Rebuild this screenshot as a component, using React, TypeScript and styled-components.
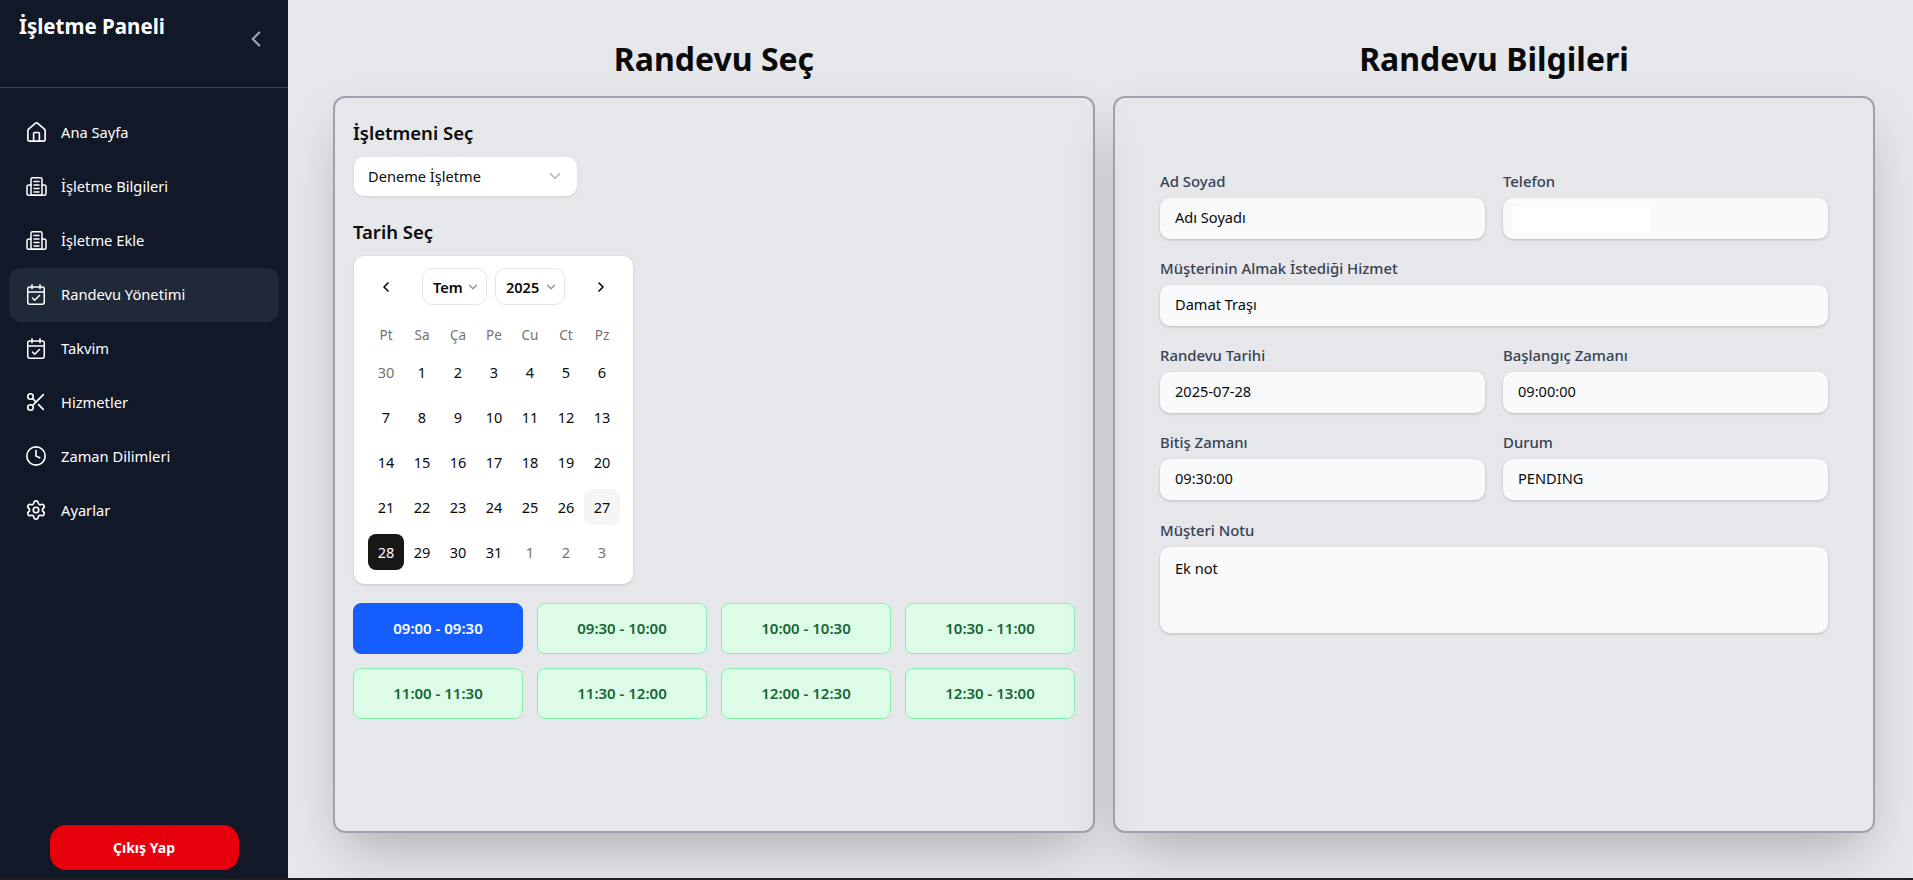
import React from 'react';
import styled, { createGlobalStyle } from 'styled-components';
import { ChevronDown, ChevronLeft, ChevronRight, Clock, House, Scissors, Settings } from 'lucide-react';

const GlobalStyle = createGlobalStyle`
  * { box-sizing: border-box; }
  html, body { margin: 0; padding: 0; background: #1f1f1f; }
  body { font-family: "Noto Sans", "Open Sans", sans-serif; }
`;

const Page = styled.div`
  display: flex;
  width: 1913px;
  height: 878px;
  overflow: hidden;
`;

const Sidebar = styled.aside`
  display: flex;
  flex-direction: column;
  width: 288px;
  flex-shrink: 0;
  background: #111827;
  color: #fff;
`;

const SidebarHeader = styled.div`
  display: flex;
  justify-content: space-between;
  height: 88px;
  padding: 11px 19px 0 19px;
  border-bottom: 1px solid #374151;
`;

const Brand = styled.h1`
  margin: 0;
  font-size: 20.5px;
  line-height: 30px;
  font-weight: 700;
`;

const Collapse = styled.span`
  display: flex;
  margin-top: 15px;
  color: #9ca3af;
`;

const Nav = styled.nav`
  display: flex;
  flex-direction: column;
  padding: 18px 9px 0;
  flex: 1;
`;

const NavItem = styled.a<{ $active?: boolean }>`
  display: flex;
  align-items: center;
  gap: 15px;
  height: 54px;
  padding: 0 0 2px 17px;
  border-radius: 12px;
  font-size: 14.7px;
  background: ${props => (props.$active ? '#1f2937' : 'transparent')};
  color: #fff;
`;

const IconBox = styled.span`
  display: flex;
  align-items: center;
  justify-content: center;
  width: 20px;
  height: 20px;
  flex-shrink: 0;
  svg { flex-shrink: 0; }
`;

const LogoutWrap = styled.div`
  display: flex;
  justify-content: center;
  padding-bottom: 8px;
`;

const LogoutButton = styled.button`
  width: 189px;
  height: 45px;
  border: none;
  border-radius: 16px;
  background: #e7000b;
  color: #fff;
  font-family: inherit;
  font-size: 14px;
  font-weight: 700;
`;

const Main = styled.main`
  flex: 1;
  display: grid;
  grid-template-columns: 762px 762px;
  column-gap: 18px;
  align-content: start;
  padding: 36px 0 0 45px;
  background: #e5e7eb;
`;

const Column = styled.section`
  display: flex;
  flex-direction: column;
`;

const Title = styled.h2`
  margin: 0 0 15px;
  height: 45px;
  font-size: 32px;
  line-height: 45px;
  font-weight: 700;
  text-align: center;
  color: #0a0a0a;
`;

const Card = styled.div`
  height: 737px;
  border: 2px solid #9ca3af;
  border-radius: 12px;
  box-shadow: 0 25px 50px -12px rgba(0, 0, 0, 0.25);
`;

const LeftCard = styled(Card)`
  padding: 21px 18px;
`;

const SectionLabel = styled.h3`
  margin: 0 0 11px;
  font-size: 18.5px;
  line-height: 27px;
  font-weight: 600;
  color: #0a0a0a;
`;

const SelectBox = styled.div`
  display: flex;
  align-items: center;
  justify-content: space-between;
  width: 223px;
  height: 39px;
  margin: 0 0 22px 1px;
  padding: 0 13px 2px 14px;
  border-radius: 10px;
  background: #fff;
  box-shadow: 0 1px 2px rgba(0, 0, 0, 0.1);
  font-size: 14.6px;
  color: #0a0a0a;
  svg { color: #b4b4b4; }
`;

const Calendar = styled.div`
  width: 279px;
  height: 328px;
  margin-left: 1px;
  padding: 12px 14px;
  border-radius: 10px;
  background: #fff;
  box-shadow: 0 1px 3px rgba(0, 0, 0, 0.15);
`;

const CalHeader = styled.div`
  display: flex;
  align-items: center;
  justify-content: space-between;
  height: 37px;
  padding: 0 10px;
  color: #0a0a0a;
`;

const CalSelects = styled.div`
  display: flex;
  gap: 8px;
`;

const CalSelect = styled.div<{ $width: number }>`
  display: flex;
  align-items: center;
  justify-content: space-between;
  width: ${props => props.$width}px;
  height: 37px;
  padding: 0 6px 0 10px;
  border: 1px solid #e5e5e5;
  border-radius: 10px;
  font-size: 14.5px;
  font-weight: 600;
  svg { color: #8a8a8a; }
`;

const CalGrid = styled.div`
  display: grid;
  grid-template-columns: repeat(7, 36px);
  grid-template-rows: 29px;
  grid-auto-rows: 45px;
  margin-top: 15px;
`;

const WeekDay = styled.div`
  display: flex;
  align-items: center;
  justify-content: center;
  font-size: 13.5px;
  color: #737373;
`;

const Day = styled.div<{ $muted?: boolean; $selected?: boolean; $today?: boolean }>`
  display: flex;
  align-items: center;
  justify-content: center;
  align-self: center;
  height: 36px;
  border-radius: 8px;
  font-size: 14.5px;
  color: ${props => (props.$selected ? '#fafafa' : props.$muted ? '#737373' : '#0a0a0a')};
  background: ${props => (props.$selected ? '#171717' : props.$today ? '#f5f5f5' : 'transparent')};
`;

const Slots = styled.div`
  display: grid;
  grid-template-columns: repeat(4, 170px);
  grid-auto-rows: 51px;
  gap: 14px;
  margin-top: 19px;
`;

const Slot = styled.button<{ $selected?: boolean }>`
  padding: 0 0 2px;
  border: 1px solid ${props => (props.$selected ? '#155dfc' : '#86efac')};
  border-radius: 8px;
  background: ${props => (props.$selected ? '#155dfc' : '#dcfce7')};
  color: ${props => (props.$selected ? '#fff' : '#166534')};
  font-family: inherit;
  font-size: 15px;
  font-weight: 600;
`;

const RightCard = styled(Card)`
  padding: 73px 0 0 45px;
`;

const FormGrid = styled.div`
  display: grid;
  grid-template-columns: 324.5px 324.5px;
  column-gap: 18.5px;
  row-gap: 19px;
`;

const Field = styled.div<{ $wide?: boolean }>`
  display: flex;
  flex-direction: column;
  gap: 6px;
  grid-column: ${props => (props.$wide ? '1 / -1' : 'auto')};
`;

const NoteField = styled(Field)`
  margin-top: 1px;
`;

const FieldLabel = styled.label`
  font-size: 14.9px;
  line-height: 21px;
  font-weight: 500;
  color: #374151;
`;

const Input = styled.div`
  position: relative;
  display: flex;
  align-items: center;
  height: 41px;
  padding: 0 15px 3px;
  border-radius: 10px;
  background: #f9fafb;
  box-shadow: 0 1px 3px rgba(0, 0, 0, 0.2);
  font-size: 14.6px;
  color: #0a0a0a;
`;

const TextArea = styled(Input)`
  align-items: flex-start;
  height: 86px;
  padding-top: 11px;
`;

const Redaction = styled.span`
  position: absolute;
  left: 10px;
  top: 9px;
  width: 137px;
  height: 26px;
  border-radius: 2px;
  background: #fff;
`;

const CalendarCheckIcon = () => (
  <svg width="18" height="21" viewBox="0 0 18 21" fill="none" stroke="currentColor" strokeWidth="1.5" strokeLinecap="round" strokeLinejoin="round">
    <rect x="0.75" y="3" width="16.5" height="17.25" rx="2" />
    <path d="M0.75 8h16.5M5 0.75v4M13 0.75v4M5.500 14l2.200 2.200 4.800-4.700" />
  </svg>
);

const BuildingIcon = () => (
  <svg width="21" height="19" viewBox="0 0 21 19" fill="none" stroke="currentColor" strokeWidth="1.5" strokeLinecap="round" strokeLinejoin="round">
    <rect x="5" y="0.75" width="11" height="17.5" rx="1.5" />
    <path d="M5 8H3a2 2 0 0 0-2 2v6.500a1.750 1.750 0 0 0 1.750 1.750h15.500A1.750 1.750 0 0 0 20 16.500V10a2 2 0 0 0-2-2h-2" />
    <path d="M8 4.500h5M8 8h5M8 11.500h5M8 15h5" />
  </svg>
);

const navItems = [
  { label: 'Ana Sayfa', icon: <House size={23} strokeWidth={1.7} /> },
  { label: 'İşletme Bilgileri', icon: <BuildingIcon /> },
  { label: 'İşletme Ekle', icon: <BuildingIcon /> },
  { label: 'Randevu Yönetimi', icon: <CalendarCheckIcon />, active: true },
  { label: 'Takvim', icon: <CalendarCheckIcon /> },
  { label: 'Hizmetler', icon: <Scissors size={22} strokeWidth={1.8} /> },
  { label: 'Zaman Dilimleri', icon: <Clock size={22} strokeWidth={1.8} /> },
  { label: 'Ayarlar', icon: <Settings size={22} strokeWidth={1.8} /> },
];

const weekDays = ['Pt', 'Sa', 'Ça', 'Pe', 'Cu', 'Ct', 'Pz'];

const days = [
  { n: 30, muted: true },
  ...Array.from({ length: 31 }, (_, i) => ({ n: i + 1, muted: false })),
  { n: 1, muted: true },
  { n: 2, muted: true },
  { n: 3, muted: true },
];

const slots = [
  '09:00 - 09:30', '09:30 - 10:00', '10:00 - 10:30', '10:30 - 11:00',
  '11:00 - 11:30', '11:30 - 12:00', '12:00 - 12:30', '12:30 - 13:00',
];

const App = () => {
  return (
    <Page>
      <GlobalStyle />
      <Sidebar>
        <SidebarHeader>
          <Brand>İşletme Paneli</Brand>
          <Collapse><ChevronLeft size={26} strokeWidth={2} /></Collapse>
        </SidebarHeader>
        <Nav>
          {navItems.map(item => (
            <NavItem key={item.label} $active={item.active}>
              <IconBox>{item.icon}</IconBox>
              {item.label}
            </NavItem>
          ))}
        </Nav>
        <LogoutWrap>
          <LogoutButton>Çıkış Yap</LogoutButton>
        </LogoutWrap>
      </Sidebar>
      <Main>
        <Column>
          <Title>Randevu Seç</Title>
          <LeftCard>
            <SectionLabel>İşletmeni Seç</SectionLabel>
            <SelectBox>
              Deneme İşletme
              <ChevronDown size={18} />
            </SelectBox>
            <SectionLabel>Tarih Seç</SectionLabel>
            <Calendar>
              <CalHeader>
                <ChevronLeft size={16} strokeWidth={2.5} />
                <CalSelects>
                  <CalSelect $width={65}>Tem<ChevronDown size={14} /></CalSelect>
                  <CalSelect $width={70}>2025<ChevronDown size={14} /></CalSelect>
                </CalSelects>
                <ChevronRight size={16} strokeWidth={2.5} />
              </CalHeader>
              <CalGrid>
                {weekDays.map(d => <WeekDay key={d}>{d}</WeekDay>)}
                {days.map((d, i) => (
                  <Day key={i} $muted={d.muted} $selected={!d.muted && d.n === 28} $today={!d.muted && d.n === 27}>
                    {d.n}
                  </Day>
                ))}
              </CalGrid>
            </Calendar>
            <Slots>
              {slots.map((s, i) => <Slot key={s} $selected={i === 0}>{s}</Slot>)}
            </Slots>
          </LeftCard>
        </Column>
        <Column>
          <Title>Randevu Bilgileri</Title>
          <RightCard>
            <FormGrid>
              <Field>
                <FieldLabel>Ad Soyad</FieldLabel>
                <Input>Adı Soyadı</Input>
              </Field>
              <Field>
                <FieldLabel>Telefon</FieldLabel>
                <Input><Redaction /></Input>
              </Field>
              <Field $wide>
                <FieldLabel>Müşterinin Almak İstediği Hizmet</FieldLabel>
                <Input>Damat Traşı</Input>
              </Field>
              <Field>
                <FieldLabel>Randevu Tarihi</FieldLabel>
                <Input>2025-07-28</Input>
              </Field>
              <Field>
                <FieldLabel>Başlangıç Zamanı</FieldLabel>
                <Input>09:00:00</Input>
              </Field>
              <Field>
                <FieldLabel>Bitiş Zamanı</FieldLabel>
                <Input>09:30:00</Input>
              </Field>
              <Field>
                <FieldLabel>Durum</FieldLabel>
                <Input>PENDING</Input>
              </Field>
              <NoteField $wide>
                <FieldLabel>Müşteri Notu</FieldLabel>
                <TextArea>Ek not</TextArea>
              </NoteField>
            </FormGrid>
          </RightCard>
        </Column>
      </Main>
    </Page>
  );
};

export default App;
